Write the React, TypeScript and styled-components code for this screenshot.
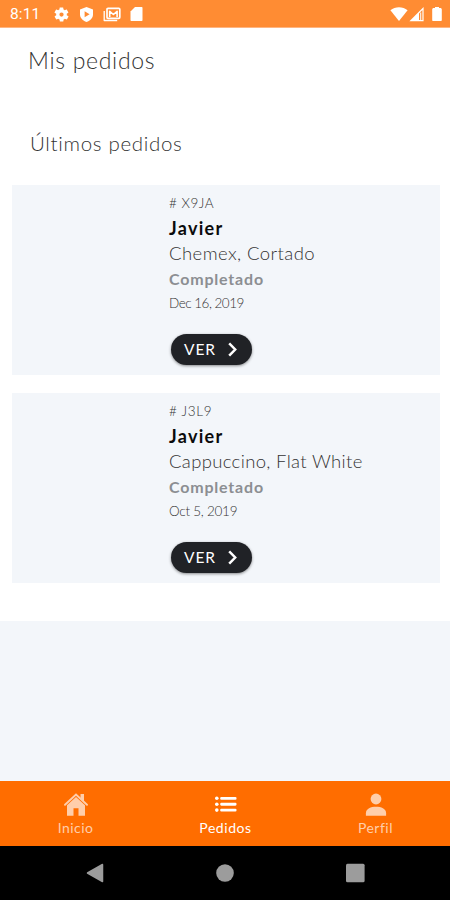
import React from "react";
import styled, { createGlobalStyle } from "styled-components";

const GlobalStyle = createGlobalStyle`
  * { box-sizing: border-box; }
  body { margin: 0; background: #f3f6fa; }
`;

const Screen = styled.div`
  width: 450px;
  height: 900px;
  display: flex;
  flex-direction: column;
  overflow: hidden;
  background: #f3f6fa;
  color: #333;
  font-family: Lato, "Open Sans", sans-serif;
  white-space: nowrap;
`;

const StatusBar = styled.header`
  flex: none;
  height: 28px;
  display: flex;
  align-items: center;
  justify-content: space-between;
  padding: 1px 8px 0 10px;
  background: #ff8c33;
  color: #fff;
  border-bottom: 1px solid #ffb581;
  svg { display: block; }
`;

const Clock = styled.span`
  width: 43px;
  font: 400 15.5px/28px Roboto, sans-serif;
  letter-spacing: 0.1px;
`;

const StatusGroup = styled.div<{ $gap: number }>`
  display: flex;
  align-items: center;
  gap: ${(p) => p.$gap}px;
`;

const Content = styled.main`
  flex: none;
  height: 593px;
  padding: 17px 10px 0 12px;
  background: #fff;
`;

const Title = styled.h1`
  margin: 0 0 0 16px;
  font-size: 23px;
  font-weight: 300;
  line-height: 30px;
  letter-spacing: 0.7px;
`;

const Subtitle = styled.h2`
  margin: 55px 0 29px 18px;
  font-size: 20.5px;
  font-weight: 300;
  line-height: 26px;
  letter-spacing: 0.68px;
`;

const OrderList = styled.div`
  display: flex;
  flex-direction: column;
  gap: 18px;
`;

const OrderCard = styled.article`
  height: 190px;
  padding: 5px 0 0 157px;
  background: #f3f6fa;
`;

type LineKind = "code" | "name" | "items" | "status" | "date";

const lineStyles: Record<LineKind, string> = {
  code: "font-size: 13.5px; font-weight: 300; line-height: 26px;",
  name: "font-size: 18px; font-weight: 700; line-height: 25px; color: #0b0b0c;",
  items: "font-size: 18.5px; font-weight: 300; line-height: 25px;",
  status: "font-size: 16px; font-weight: 700; line-height: 25px; color: #8c8e92;",
  date: "font-size: 13.5px; font-weight: 300; line-height: 25px;",
};

const OrderLine = styled.div<{ $kind: LineKind; $spacing: number }>`
  ${(p) => lineStyles[p.$kind]}
  letter-spacing: ${(p) => p.$spacing}px;
`;

const ViewButton = styled.button`
  width: 81px;
  height: 31px;
  margin: 18px 0 0 2px;
  padding: 0 14px 0 13px;
  display: flex;
  align-items: center;
  justify-content: space-between;
  border: 0;
  border-radius: 16px;
  background: #202226;
  color: #fff;
  font: 400 15.5px/31px Lato, sans-serif;
  letter-spacing: 0.9px;
  box-shadow: 0 1px 3px rgba(0, 0, 0, 0.45);
`;

const Spacer = styled.div`
  flex: 1;
`;

const TabBar = styled.nav`
  flex: none;
  height: 65px;
  display: grid;
  grid-template-columns: repeat(3, 1fr);
  background: #ff6d00;
`;

const Tab = styled.a<{ $active?: boolean; $spacing: number }>`
  display: flex;
  flex-direction: column;
  align-items: center;
  padding: 11px 0 0 1px;
  color: ${(p) => (p.$active ? "#fff" : "#ffceab")};
  font-size: 14px;
  font-weight: 400;
  line-height: 22px;
  letter-spacing: ${(p) => p.$spacing}px;
  svg { display: block; }
`;

const SystemBar = styled.footer`
  flex: none;
  height: 54px;
  display: flex;
  align-items: center;
  justify-content: space-between;
  padding: 0 85px 0 86px;
  background: #000;
`;

const orders = [
  { code: "# X9JA", codeLs: 0.5, name: "Javier", items: "Chemex, Cortado", itemsLs: 0.44, date: "Dec 16, 2019", dateLs: -0.5 },
  { code: "# J3L9", codeLs: 0.7, name: "Javier", items: "Cappuccino, Flat White", itemsLs: 0.34, date: "Oct 5, 2019", dateLs: -0.25 },
];

const GearIcon = () => (
  <svg width="17" height="17" viewBox="0 0 24 24" fill="currentColor">
    <path d="M19.4 13c0-.3.1-.6.1-1s0-.7-.1-1l2.1-1.6c.2-.2.3-.4.1-.7l-2-3.400c-.1-.2-.4-.3-.6-.2l-2.500 1c-.5-.4-1.100-.7-1.700-1l-.4-2.600c0-.3-.2-.5-.5-.5h-4c-.2 0-.4.2-.5.400L9 5.100c-.6.3-1.200.6-1.700 1l-2.500-1c-.200-.1-.5 0-.6.2l-2 3.400c-.1.3-.1.6.1.700L4.600 11c0 .3-.1.700-.1 1s0 .7.1 1l-2.100 1.600c-.2.200-.3.500-.1.700l2 3.500c.1.200.4.300.6.200l2.500-1c.5.400 1.100.7 1.700 1l.4 2.600c0 .200.2.400.5.400h4c.3 0 .5-.2.5-.4l.4-2.600c.6-.3 1.200-.6 1.700-1l2.500 1c.2.1.5 0 .6-.2l2-3.500c.1-.2.1-.5-.1-.7L19.400 13zM12 15a3 3 0 1 1 0-6 3 3 0 0 1 0 6z" />
  </svg>
);

const ShieldIcon = () => (
  <svg width="15" height="17" viewBox="0 0 15 17">
    <path fill="currentColor" d="M7.500 1l6.500 2.500v5c0 3.400-2.800 6.200-6.500 7.500C3.800 14.700 1 11.900 1 8.500v-5z" />
    <path fill="#ff8c33" d="M5.600 5.300l5 3-5 3z" />
  </svg>
);

const MailPhotoIcon = () => (
  <svg width="18" height="15" viewBox="0 0 18 15" fill="none" stroke="currentColor" strokeLinejoin="round">
    <path strokeWidth="1.300" d="M1.200 4v9.500h13" />
    <rect x="4" y="1.300" width="12.800" height="10" rx="1" strokeWidth="1.700" />
    <path strokeWidth="1.600" d="M6.700 10V4.300l3.700 3.200 3.700-3.200V10" />
  </svg>
);

const SdIcon = () => (
  <svg width="13" height="16" viewBox="0 0 13 16" fill="currentColor">
    <path d="M5 1h6.500c.6 0 1 .4 1 1v12c0 .6-.4 1-1 1h-10c-.6 0-1-.4-1-1V5.500z" />
  </svg>
);

const WifiIcon = () => (
  <svg width="18" height="16" viewBox="0 0 18 16" fill="currentColor">
    <path d="M.4 4.300C5.300.2 12.700.2 17.600 4.300L9 15z" />
  </svg>
);

const SignalIcon = () => (
  <svg width="15" height="16" viewBox="0 0 15 16">
    <path fill="currentColor" fillRule="evenodd" d="M14.600 1v14.200H.4zM10 7.500V13.900H13.400V4.100z" />
    <path fill="currentColor" d="M11.200 6.500h1v7.400h-1z" />
  </svg>
);

const BatteryIcon = () => (
  <svg width="10" height="16" viewBox="0 0 10 16" fill="currentColor">
    <path d="M3 1h4v1h1.300c.8 0 1.500.6 1.500 1.400V14c0 .6-.4 1-1 1H1.200c-.6 0-1-.4-1-1V3.400c0-.8.7-1.400 1.500-1.400H3z" />
  </svg>
);

const ChevronIcon = () => (
  <svg width="11" height="15" viewBox="0 0 11 15" fill="none" stroke="currentColor" strokeWidth="2.500">
    <path d="M2.200 1.300l6 6.200-6 6.200" />
  </svg>
);

const HomeIcon = () => (
  <svg width="26" height="25" viewBox="0 0 26 25" fill="currentColor">
    <path d="M4 13.200L13 5l9 8.200v10.600h-6.500v-7.500h-5v7.500H4z" />
    <path d="M2 12.800L13 2.600l11 10.200" fill="none" stroke="currentColor" strokeWidth="1.900" strokeLinecap="round" />
    <path d="M17.500 2h3.500v8l-3.500-3.400z" />
  </svg>
);

const ListIcon = () => (
  <svg width="26" height="25" viewBox="0 0 26 25" fill="currentColor">
    {[4.9, 10.8, 16.7].map((y) => (
      <g key={y}>
        <circle cx="3.800" cy={y + 1.4} r="1.800" />
        <rect x="7.200" y={y} width="16.300" height="2.900" rx="1.100" />
      </g>
    ))}
  </svg>
);

const PersonIcon = () => (
  <svg width="26" height="25" viewBox="0 0 26 25" fill="currentColor">
    <circle cx="13" cy="7" r="5.400" />
    <path d="M2.900 23.800v-2.600c0-4.500 5-6.400 10.100-6.400s10.100 1.900 10.100 6.400v2.600z" />
  </svg>
);

export default function App() {
  return (
    <>
      <GlobalStyle />
      <Screen>
        <StatusBar>
          <StatusGroup $gap={0}>
            <Clock>8:11</Clock>
            <StatusGroup $gap={9}>
              <GearIcon />
              <ShieldIcon />
              <MailPhotoIcon />
              <SdIcon />
            </StatusGroup>
          </StatusGroup>
          <StatusGroup $gap={8}>
            <StatusGroup $gap={1}>
              <WifiIcon />
              <SignalIcon />
            </StatusGroup>
            <BatteryIcon />
          </StatusGroup>
        </StatusBar>

        <Content>
          <Title>Mis pedidos</Title>
          <Subtitle>Últimos pedidos</Subtitle>
          <OrderList>
            {orders.map((o) => (
              <OrderCard key={o.code}>
                <OrderLine $kind="code" $spacing={o.codeLs}>{o.code}</OrderLine>
                <OrderLine $kind="name" $spacing={1.3}>{o.name}</OrderLine>
                <OrderLine $kind="items" $spacing={o.itemsLs}>{o.items}</OrderLine>
                <OrderLine $kind="status" $spacing={0.8}>Completado</OrderLine>
                <OrderLine $kind="date" $spacing={o.dateLs}>{o.date}</OrderLine>
                <ViewButton>
                  VER
                  <ChevronIcon />
                </ViewButton>
              </OrderCard>
            ))}
          </OrderList>
        </Content>

        <Spacer />

        <TabBar>
          <Tab $spacing={0.45}>
            <HomeIcon />
            Inicio
          </Tab>
          <Tab $active $spacing={0.55}>
            <ListIcon />
            Pedidos
          </Tab>
          <Tab $spacing={0.5}>
            <PersonIcon />
            Perfil
          </Tab>
        </TabBar>

        <SystemBar>
          <svg width="18" height="20" viewBox="0 0 18 20">
            <path d="M1.500 10L16.500 1.500v17z" fill="#9c9c9c" stroke="#9c9c9c" strokeWidth="1.500" strokeLinejoin="round" />
          </svg>
          <svg width="18" height="20" viewBox="0 0 18 20">
            <circle cx="9" cy="10" r="8.800" fill="#9c9c9c" />
          </svg>
          <svg width="19" height="20" viewBox="0 0 19 20">
            <rect x="0" y="0.700" width="18.600" height="18.600" rx="1.500" fill="#9c9c9c" />
          </svg>
        </SystemBar>
      </Screen>
    </>
  );
}
